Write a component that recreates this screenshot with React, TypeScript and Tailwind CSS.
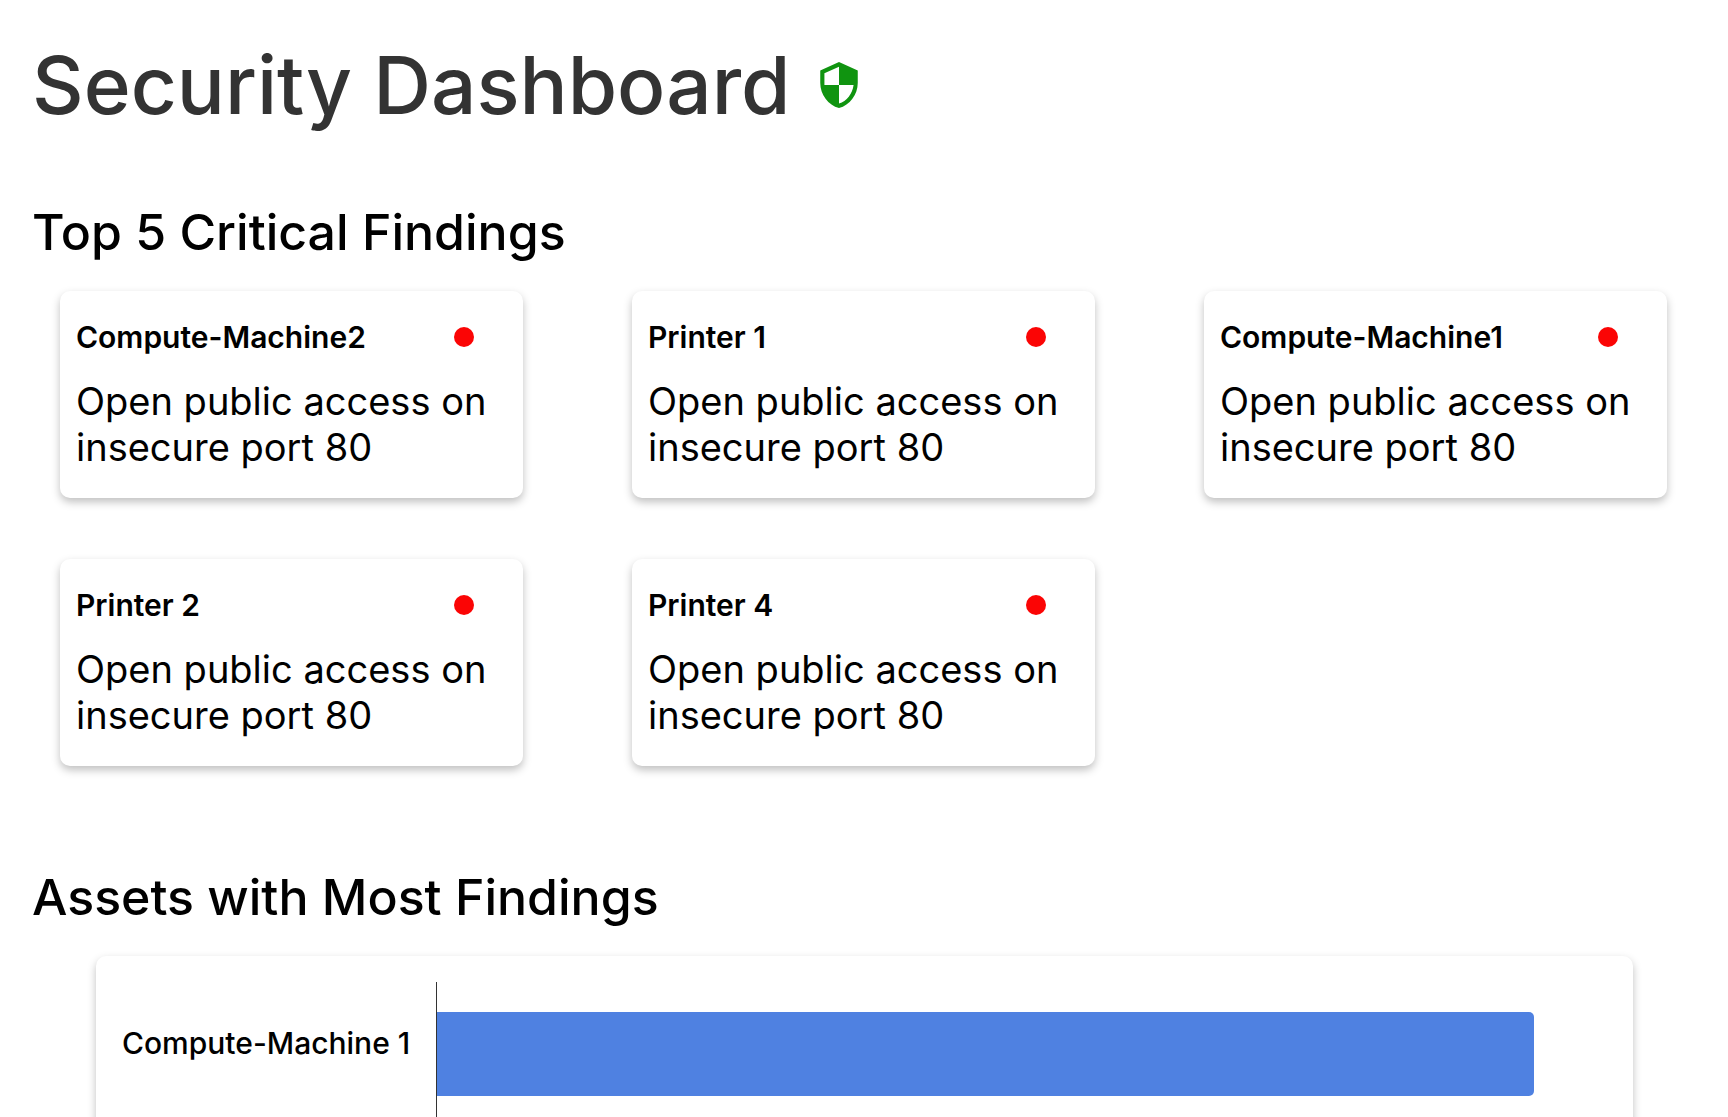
import { MdSecurity } from "react-icons/md";

const findings = [
  { asset: "Compute-Machine2", detail: "Open public access on insecure port 80" },
  { asset: "Printer 1", detail: "Open public access on insecure port 80" },
  { asset: "Compute-Machine1", detail: "Open public access on insecure port 80" },
  { asset: "Printer 2", detail: "Open public access on insecure port 80" },
  { asset: "Printer 4", detail: "Open public access on insecure port 80" },
];

const assets = [{ name: "Compute-Machine 1", share: 94 }];

function FindingCard({ asset, detail }: { asset: string; detail: string }) {
  return (
    <li className="rounded-[10px] bg-white px-4 py-7 shadow-[0_4px_8px_rgba(0,0,0,0.25)]">
      <div className="flex items-center justify-between pr-[33px]">
        <h3 className="text-[30px] leading-9 font-semibold">{asset}</h3>
        <span role="img" aria-label="Critical" className="size-5 shrink-0 rounded-full bg-[#fb0505]" />
      </div>
      <p className="mt-[23px] text-[38px] leading-[46px]">{detail}</p>
    </li>
  );
}

export default function App() {
  return (
    <main className="h-screen overflow-hidden bg-white font-['Inter',sans-serif] text-black">
      <header className="flex items-center gap-[23px] px-8 pt-9">
        <h1 className="text-[80px] leading-[97px] font-medium text-[#333333]">Security Dashboard</h1>
        <MdSecurity className="size-[50px] text-[#109410]" aria-hidden="true" />
      </header>

      <section className="mt-[69px]">
        <h2 className="px-8 text-[50px] leading-[60px] font-medium">Top 5 Critical Findings</h2>
        <ul className="mt-[29px] grid grid-cols-3 gap-x-[109px] gap-y-[61px] pr-[61px] pl-[60px]">
          {findings.map((finding) => (
            <FindingCard key={finding.asset} {...finding} />
          ))}
        </ul>
      </section>

      <section className="mt-[101px]">
        <h2 className="px-8 text-[50px] leading-[60px] font-medium">Assets with Most Findings</h2>
        <div className="mr-[95px] ml-24 mt-[29px] rounded-[10px] bg-white pt-[26px] pr-[29px] pb-7 pl-[26px] shadow-[0_4px_8px_rgba(0,0,0,0.25)]">
          {assets.map((asset) => (
            <div key={asset.name} className="flex">
              <div className="w-[314px] shrink-0 pt-[43px] text-[30px] leading-9 font-medium">{asset.name}</div>
              <div className="flex h-[168px] grow border-l border-[#333333] pt-[30px]">
                <div
                  className="h-[84px] rounded-r-[5px] bg-[#4f81e1]"
                  style={{ width: `${asset.share}%` }}
                />
              </div>
            </div>
          ))}
        </div>
      </section>
    </main>
  );
}
